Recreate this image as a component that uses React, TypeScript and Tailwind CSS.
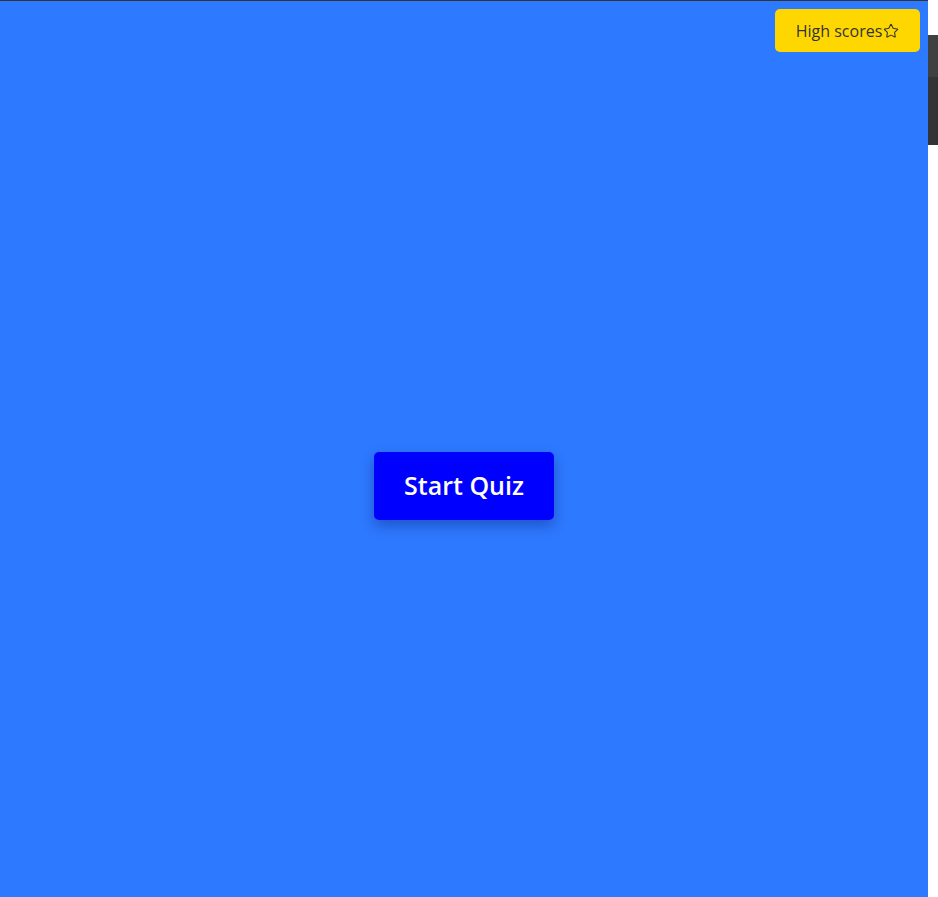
import React from 'react';
import { Star } from 'lucide-react';

const App: React.FC = () => {
  return (
    <div className="flex w-full min-h-[897px] bg-white" style={{ fontFamily: '"Open Sans", "Liberation Sans", sans-serif' }}>
      <div className="flex flex-col w-[928px] min-h-[897px] bg-[#2d79ff] border-t border-[#333333]">
        <div className="flex justify-end pt-2 pr-2">
          <button className="flex items-center h-[43px] w-[145px] justify-center rounded-[5px] bg-[#ffd700] text-[16px] text-[#333333]">
            High scores
            <Star size={16} strokeWidth={1.6} className="ml-px" />
          </button>
        </div>
        <div className="flex flex-1 items-start justify-center pt-[400px]">
          <button className="w-[180px] h-[68px] rounded-[5px] bg-[#0000ff] text-white text-[25px] font-semibold shadow-[0_6px_14px_rgba(0,0,80,0.3)]">
            Start Quiz
          </button>
        </div>
      </div>
      <div className="flex flex-col w-[10px] pt-[35px]">
        <div className="h-[42px] bg-[#3e4042]" />
        <div className="h-[68px] bg-[#333437]" />
      </div>
    </div>
  );
};

export default App;
